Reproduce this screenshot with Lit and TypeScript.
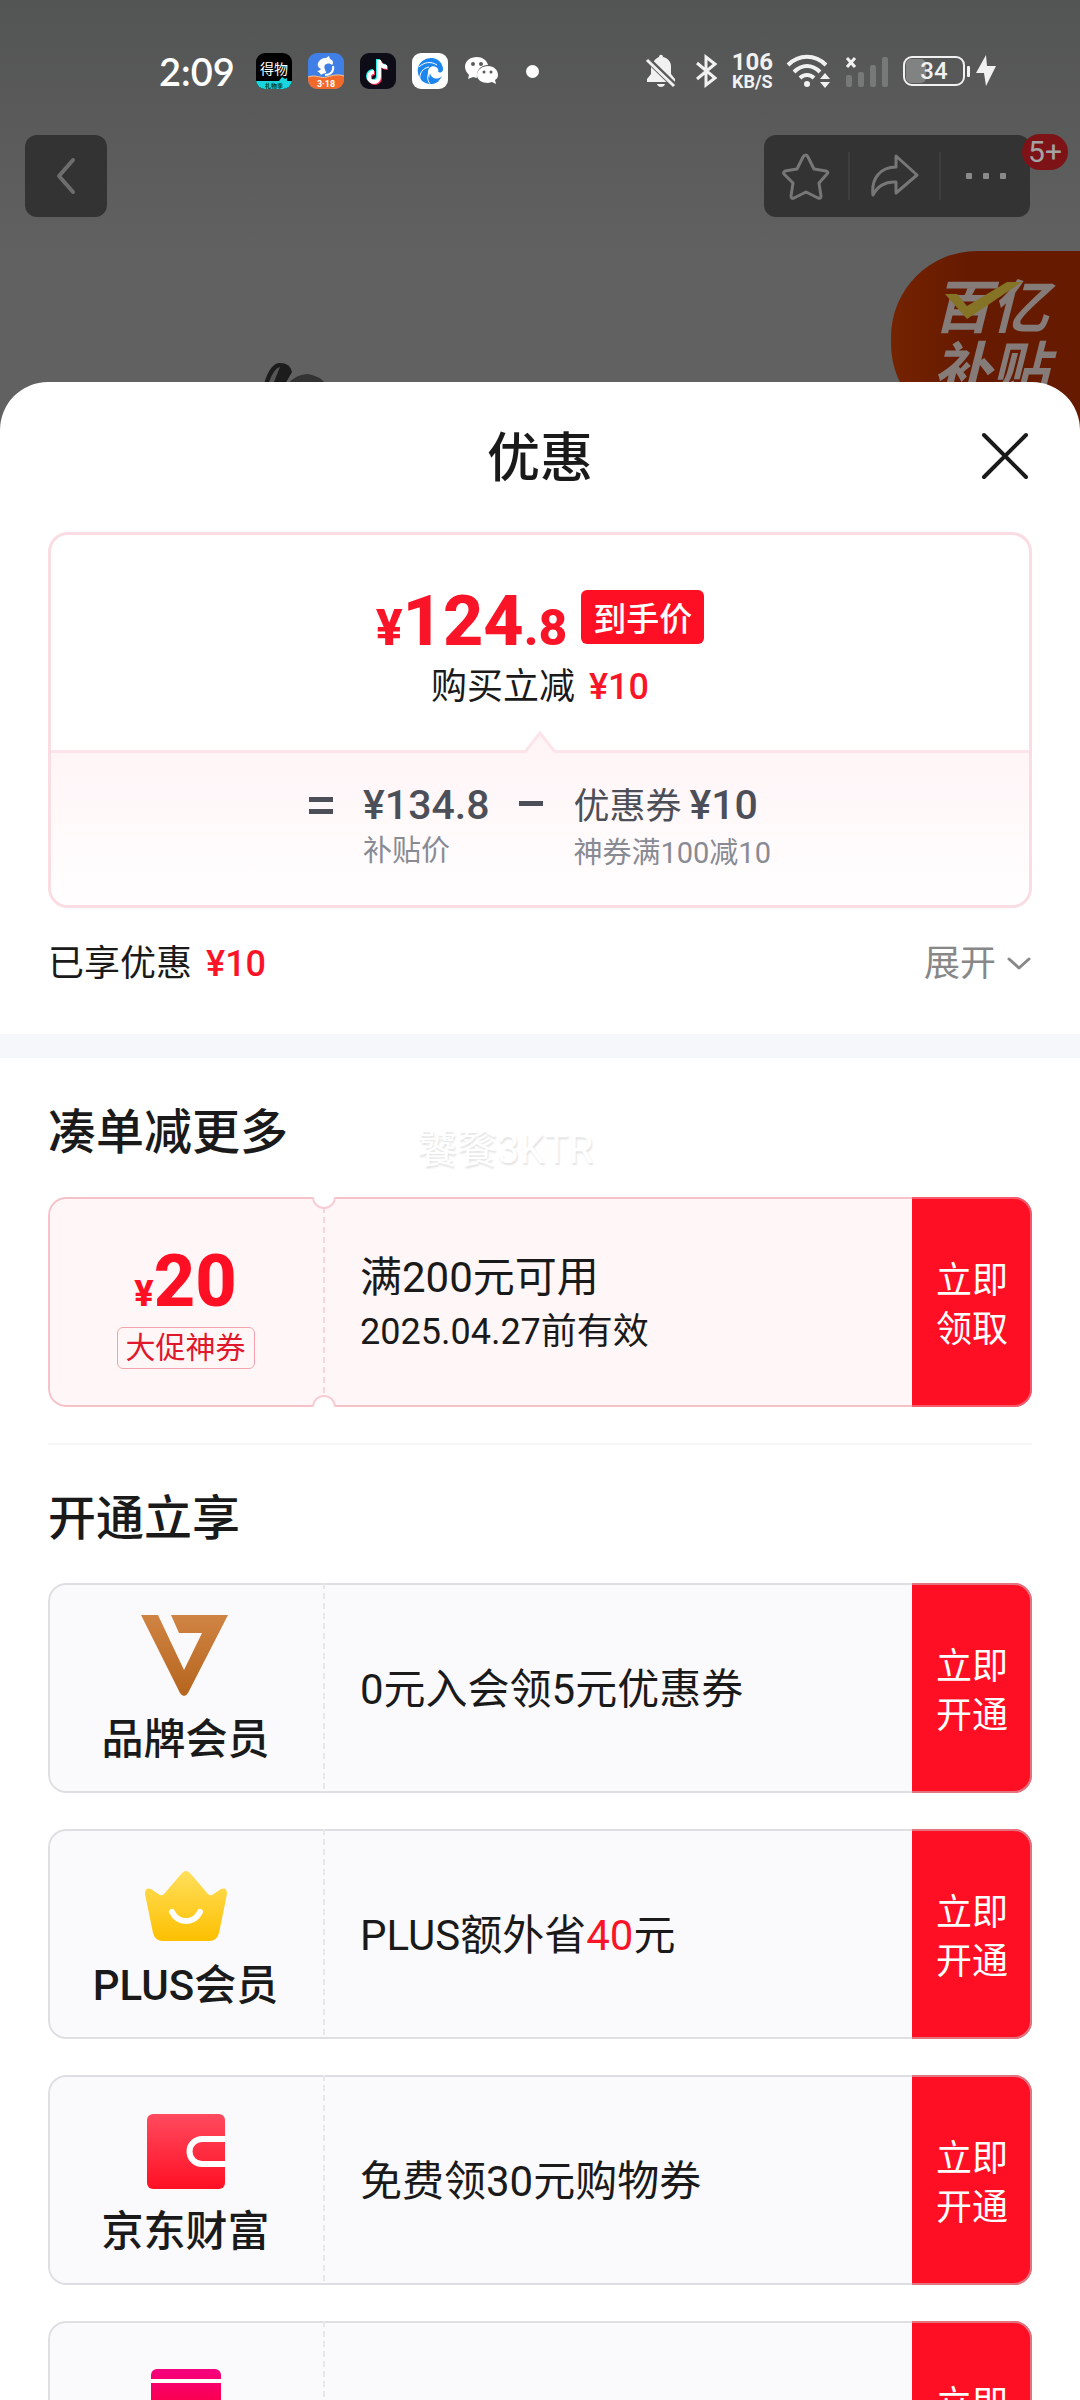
import { LitElement, html, css, svg, TemplateResult } from "lit";
import { customElement, property } from "lit/decorators.js";

/* Shared reset for real buttons that are styled from scratch. */
const buttonReset = css`
  button {
    appearance: none;
    border: 0;
    margin: 0;
    padding: 0;
    background: none;
    color: inherit;
    font: inherit;
    cursor: pointer;
  }
  svg {
    display: block;
  }
`;

@customElement("status-bar")
export class StatusBar extends LitElement {
  static styles = css`
    :host {
      display: flex;
      align-items: center;
      justify-content: space-between;
      padding: 50px 84px 0 159px;
      color: #fff;
      font-family: Roboto, "Noto Sans CJK SC", sans-serif;
    }
    svg {
      display: block;
    }
    .side {
      display: flex;
      align-items: center;
      gap: 16px;
      height: 42px;
    }
    .time {
      font: 600 38px/42px Lato, Roboto, sans-serif;
      margin-right: 5px;
    }
    .tail {
      gap: 13px;
      opacity: 0.92;
    }
    .mute {
      margin-right: 4px;
    }
    .dot {
      width: 13px;
      height: 13px;
      margin-left: 10px;
      border-radius: 50%;
      background: #fff;
    }
    .speed {
      text-align: center;
      font-weight: 700;
    }
    .rate {
      font-size: 24px;
      line-height: 22px;
    }
    .unit {
      font-size: 18px;
      line-height: 18px;
    }
    .power {
      display: flex;
      align-items: center;
      gap: 6px;
    }
  `;

  render() {
    return html`
      <div class="side">
        <span class="time">2:09</span>
        <svg width="36" height="36" viewBox="0 0 36 36">
          <clipPath id="r1"><rect width="36" height="36" rx="9" /></clipPath>
          <g clip-path="url(#r1)">
            <rect width="36" height="36" fill="#000" />
            <path d="M0 28h23l3-4 3 2 2-1v3h5v8H0z" fill="#17d6de" />
          </g>
          <text x="18" y="21" text-anchor="middle" font-size="14" font-weight="400" fill="#fff">得物</text>
          <text x="18" y="35" text-anchor="middle" font-size="6" font-weight="700" fill="#043">礼物季</text>
        </svg>
        <svg width="36" height="36" viewBox="0 0 36 36">
          <clipPath id="r2"><rect width="36" height="36" rx="9" /></clipPath>
          <g clip-path="url(#r2)">
            <rect width="36" height="36" fill="#3f7fe6" />
            <path d="M0 24c9-3 12 2 19 0s11-3 17-1v13H0z" fill="#f26a2b" />
            <path d="M0 24c9-3 12 2 19 0s11-3 17-1" fill="none" stroke="#fbc78d" stroke-width="1" />
          </g>
          <path d="M10 10c2-4 5-5 8-5l3-2 1 3c3 1 4 4 2 6-2-2-5-2-7 0-2 3 1 5 1 8-2 0-4 1-5 2-1-2-2-3-4-4 2 0 3-1 4-2-2-1-4-3-3-6z" fill="#fff" />
          <path d="M25 13c1 5-2 9-8 9" fill="none" stroke="#fff" stroke-width="2" />
          <text x="18" y="34" text-anchor="middle" font-size="9" font-weight="700" fill="#fff">3·18</text>
        </svg>
        <svg width="36" height="36" viewBox="0 0 36 36">
          <rect width="36" height="36" rx="9" fill="#0d0c17" />
          <g fill="none" stroke-width="4">
            <path d="M18 6v17a5 5 0 1 1-5-5M18 7c1 4 4 6 8 6" stroke="#25f4ee" />
            <path d="M20 8v17a5 5 0 1 1-5-5M20 9c1 4 4 6 8 6" stroke="#fe2c55" />
            <path d="M19 7v17a5 5 0 1 1-5-5M19 8c1 4 4 6 8 6" stroke="#fff" />
          </g>
        </svg>
        <svg width="36" height="36" viewBox="0 0 36 36">
          <rect width="36" height="36" rx="9" fill="#fff" />
          <path d="M29 10A13 13 0 1 0 27 28C21 29 15 25 16 19c0-4 4-7 8-5 2 1 3 3 2 5 3 1 5 0 5-3 0-2-1-4-2-6z" fill="#1c86ee" />
          <path d="M7 14c5-5 12-6 18-2M8 27c-1-7 3-12 9-13M19 32c-4-4-4-9-2-12" fill="none" stroke="#fff" stroke-width="1" />
          <path d="M18 20c1 5 7 8 12 3-2 5-7 8-11 8-2-3-2-8-1-11z" fill="#1c86ee" />
        </svg>
        <svg width="36" height="30" viewBox="0 0 36 30">
          <path d="M13 1C6 1 1 5 1 11c0 3 2 6 4 8l-1 4 5-2 4 1C12 14 17 9 24 9 23 4 18 1 13 1z" fill="#fff" />
          <path d="M24 10c-6 0-11 4-11 9s5 8 11 8l4-1 4 2-1-4c2-1 3-3 3-5 0-5-4-9-10-9z" fill="#fff" />
          <g fill="#5a5b5b">
            <circle cx="9" cy="8" r="2" /><circle cx="17" cy="8" r="2" />
            <circle cx="20" cy="16" r="1.5" /><circle cx="27" cy="16" r="1.5" />
          </g>
        </svg>
        <span class="dot"></span>
      </div>

      <div class="side tail">
        <svg class="mute" width="34" height="34" viewBox="0 0 34 34">
          <path d="M10 7c1-2 3-3 5-4 0-3 4-3 4 0 5 1 8 5 8 9v8l4 5v3H3v-3l4-5v-9z" fill="#fff" />
          <path d="M13 30h8c-1 4-7 4-8 0z" fill="#fff" />
          <path d="M2 4l30 29" stroke="#5a5b5b" stroke-width="6" />
          <path d="M3 6l27 26" stroke="#fff" stroke-width="3" />
        </svg>
        <svg width="24" height="34" viewBox="0 0 24 34">
          <path d="M2 9l18 15-9 7V3l9 7L2 25" fill="none" stroke="#fff" stroke-width="3" />
        </svg>
        <div class="speed">
          <div class="rate">106</div>
          <div class="unit">KB/S</div>
        </div>
        <svg width="46" height="36" viewBox="0 0 46 36">
          <g fill="none" stroke="#fff" stroke-width="4">
            <path d="M2 12c11-11 27-11 38 0" /><path d="M8 19c8-8 18-8 26 0" /><path d="M14 25c4-4 10-4 14 0" />
          </g>
          <circle cx="21" cy="31" r="3" fill="#fff" />
          <path d="M34 26l5-6 5 6zM34 29l5 6 5-6z" fill="#fff" />
        </svg>
        <svg width="44" height="34" viewBox="0 0 44 34">
          <path d="M2 4l8 9M10 4l-8 9" stroke="#fff" stroke-width="3" />
          <g fill="#7a7b7b">
            <rect x="1" y="21" width="6" height="12" rx="2" /><rect x="13" y="18" width="6" height="15" rx="2" />
            <rect x="25" y="11" width="6" height="22" rx="2" /><rect x="37" y="3" width="6" height="30" rx="2" />
          </g>
        </svg>
        <div class="power">
          <svg width="68" height="32" viewBox="0 0 68 32">
            <rect x="4" y="4" width="20" height="24" rx="5" fill="#858686" />
            <rect x="2" y="2" width="60" height="28" rx="8" fill="none" stroke="#fff" stroke-width="2" />
            <rect x="65" y="11" width="3" height="11" rx="1" fill="#fff" />
            <text x="32" y="24" text-anchor="middle" font-size="24" font-weight="500" fill="#fff">34</text>
          </svg>
          <svg width="20" height="34" viewBox="0 0 20 34">
            <path d="M10 1L0 19h8l2 13L20 12h-9z" fill="#fff" />
          </svg>
        </div>
      </div>
    `;
  }
}

@customElement("product-backdrop")
export class ProductBackdrop extends LitElement {
  static styles = [
    buttonReset,
    css`
      :host {
        display: block;
        color: #8a8a8a;
        font-family: Roboto, "Noto Sans CJK SC", sans-serif;
      }
      .nav {
        display: flex;
        justify-content: space-between;
        padding: 43px 50px 0 25px;
      }
      .back,
      .tools {
        display: flex;
        align-items: center;
        justify-content: center;
        height: 82px;
        border-radius: 12px;
        background: #333;
      }
      .back {
        width: 82px;
      }
      .tools {
        position: relative;
      }
      .tool {
        display: grid;
        place-items: center;
        width: 84px;
        height: 48px;
      }
      .tool + .tool {
        width: 91px;
        border-left: 2px solid #3e3e3e;
      }
      .badge {
        position: absolute;
        top: -1px;
        right: -38px;
        padding: 0 6px;
        border-radius: 18px;
        background: #7d1317;
        color: #a3a3a3;
        font-size: 30px;
        line-height: 36px;
      }
      .hero {
        display: flex;
        align-items: flex-end;
        justify-content: space-between;
        height: 179px;
        margin-top: 34px;
      }
      .product {
        margin-left: 264px;
      }
      .subsidy {
        position: relative;
        box-sizing: border-box;
        width: 189px;
        height: 179px;
        padding: 26px 0 0 42px;
        border-radius: 86px 0 0 86px;
        background: linear-gradient(90deg, #752300, #661a00 40%);
        color: #857c7a;
        font-size: 58px;
        font-weight: 700;
        font-style: italic;
        line-height: 62px;
      }
      .tick {
        position: absolute;
        left: 54px;
        top: 30px;
      }
    `,
  ];

  render() {
    return html`
      <div class="nav">
        <button class="back" aria-label="返回">
          <svg width="24" height="40" viewBox="0 0 24 40">
            <path d="M19 4L5 20l14 16" fill="none" stroke="#6e6e6e" stroke-width="4" stroke-linecap="round" stroke-linejoin="round" />
          </svg>
        </button>
        <div class="tools">
          <button class="tool" aria-label="收藏">
            <svg width="48" height="48" viewBox="0 0 48 48">
              <path d="M24 3q1 0 2 2l6 12 12 2q3 1 1 3l-8 9 2 13q0 3-3 2l-12-6-12 6q-3 1-3-2l2-13-9-9q-1-2 1-3l12-2 6-12q1-2 3-2z" fill="none" stroke="#777" stroke-width="3" stroke-linejoin="round" />
            </svg>
          </button>
          <button class="tool" aria-label="分享">
            <svg width="50" height="46" viewBox="0 0 50 46">
              <path d="M26 3l21 19-21 18V29C15 28 7 34 3 42 1 26 10 14 26 14z" fill="none" stroke="#777" stroke-width="3" stroke-linejoin="round" />
            </svg>
          </button>
          <button class="tool" aria-label="更多">
            <svg width="40" height="6" viewBox="0 0 40 6" fill="#8a8a8a">
              <rect width="6" height="6" rx="1" /><rect x="17" width="6" height="6" rx="1" /><rect x="34" width="6" height="6" rx="1" />
            </svg>
          </button>
          <span class="badge">5+</span>
        </div>
      </div>
      <div class="hero">
        <svg class="product" width="64" height="68" viewBox="0 0 64 68">
          <path d="M0 22Q6 1 16 1q10 0 12 9l-8 14z" fill="#1c1c1c" />
          <path d="M5 20Q10 6 16 5L10 20z" fill="#555" />
          <path d="M24 22q8-10 20-10 12 2 18 10z" fill="#333" />
        </svg>
        <div class="subsidy">
          <div>百亿</div>
          <div>补贴</div>
          <svg class="tick" width="78" height="40" viewBox="0 0 78 40">
            <path d="M0 13h12l10 12L62 1h15L22 38z" fill="#857425" />
          </svg>
        </div>
      </div>
    `;
  }
}

@customElement("price-summary")
export class PriceSummary extends LitElement {
  static styles = [
    buttonReset,
    css`
      :host {
        display: block;
        padding: 0 48px 46px;
      }
      .card {
        border: 3px solid #f9dde3;
        border-radius: 20px;
        overflow: hidden;
      }
      .total {
        padding: 55px 0 39px;
        text-align: center;
      }
      .price-row {
        display: flex;
        justify-content: center;
        align-items: center;
        gap: 14px;
        height: 54px;
      }
      .price {
        padding-top: 14px;
        color: #fa1428;
        font-size: 50px;
        font-weight: 800;
        line-height: 54px;
      }
      .big {
        font-size: 70px;
      }
      .tag {
        padding: 0 12px;
        border-radius: 6px;
        background: #ff0f23;
        color: #fff;
        font: 500 33px/54px "Noto Sans CJK SC", sans-serif;
      }
      .saving {
        margin-top: 19px;
        font-size: 36px;
        line-height: 48px;
      }
      .red {
        margin-left: 14px;
        color: #fa1428;
        font-weight: 500;
      }
      .formula {
        position: relative;
        display: flex;
        justify-content: center;
        gap: 30px;
        padding: 28px 0 34px;
        border-top: 3px solid #fce4ea;
        background: linear-gradient(#fff5f7, #fffefe);
        color: #4d4f58;
        font-size: 41px;
        font-weight: 500;
        line-height: 48px;
      }
      .caret {
        position: absolute;
        left: 50%;
        top: -23px;
        margin-left: -16px;
      }
      .sign {
        padding-top: 16px;
      }
      .name {
        margin-right: 8px;
        font-size: 36px;
        font-weight: 400;
      }
      .note {
        margin-top: 4px;
        color: #888b94;
        font-size: 29px;
        font-weight: 400;
        line-height: 36px;
      }
      .foot {
        display: flex;
        justify-content: space-between;
        align-items: center;
        margin-top: 32px;
        font-size: 36px;
        line-height: 48px;
      }
      .expand {
        display: flex;
        align-items: center;
        gap: 10px;
        color: #888;
      }
    `,
  ];

  render() {
    return html`
      <div class="card">
        <div class="total">
          <div class="price-row">
            <div class="price">¥<span class="big">124</span>.8</div>
            <span class="tag">到手价</span>
          </div>
          <div class="saving">购买立减<span class="red">¥10</span></div>
        </div>
        <div class="formula">
          <svg class="caret" width="32" height="24" viewBox="0 0 32 24">
            <path d="M1 22L16 3l15 19v2H1z" fill="#fff5f7" />
            <path d="M1 22L16 3l15 19" fill="none" stroke="#fce4ea" stroke-width="3" />
          </svg>
          <svg class="sign" role="img" aria-label="等于" width="24" height="18" viewBox="0 0 24 18" fill="#4d4f58">
            <rect width="24" height="5" /><rect y="12" width="24" height="5" />
          </svg>
          <div>
            <div>¥134.8</div>
            <div class="note">补贴价</div>
          </div>
          <svg class="sign" role="img" aria-label="减" width="24" height="18" viewBox="0 0 24 18" fill="#4d4f58">
            <rect y="4" width="24" height="5" />
          </svg>
          <div>
            <div><span class="name">优惠券</span>¥10</div>
            <div class="note">神券满100减10</div>
          </div>
        </div>
      </div>
      <div class="foot">
        <span>已享优惠<span class="red">¥10</span></span>
        <button class="expand">
          展开
          <svg width="26" height="16" viewBox="0 0 26 16">
            <path d="M3 3l10 9 10-9" fill="none" stroke="#888" stroke-width="3" stroke-linecap="round" stroke-linejoin="round" />
          </svg>
        </button>
      </div>
    `;
  }
}

@customElement("ticket-card")
export class TicketCard extends LitElement {
  @property() action = "";
  @property({ type: Boolean, reflect: true }) coupon = false;

  static styles = [
    buttonReset,
    css`
      :host {
        --edge: rgba(200, 200, 206, 0.55);
        --dash: #e8e8ec;
        position: relative;
        display: flex;
        height: 210px;
        border-radius: 18px;
        overflow: hidden;
        background: #fafafc;
      }
      :host([coupon]) {
        --edge: rgba(240, 150, 165, 0.55);
        --dash: #f6d6dc;
        background: #fff6f7;
      }
      :host::after {
        content: "";
        position: absolute;
        inset: 0;
        border: 2px solid var(--edge);
        border-radius: 18px;
        pointer-events: none;
      }
      .lead {
        width: 275px;
      }
      .perforation {
        position: relative;
        z-index: 1;
        width: 2px;
        background: repeating-linear-gradient(var(--dash) 0 6px, transparent 6px 10px);
      }
      :host([coupon]) .perforation::before,
      :host([coupon]) .perforation::after {
        content: "";
        position: absolute;
        left: -11px;
        box-sizing: border-box;
        width: 24px;
        height: 24px;
        border: 2px solid #f8cdd5;
        border-radius: 50%;
        background: #fff;
      }
      .perforation::before {
        top: -12px;
      }
      .perforation::after {
        bottom: -12px;
      }
      .body {
        flex: 1;
        display: flex;
        flex-direction: column;
        justify-content: center;
        padding: 4px 0 0 35px;
      }
      .act {
        width: 120px;
        padding: 0 24px;
        background: #ff0f23;
        color: #fff;
        font: 400 36px/49px "Noto Sans CJK SC", sans-serif;
      }
    `,
  ];

  render() {
    return html`
      <div class="lead"><slot name="lead"></slot></div>
      <div class="perforation"></div>
      <div class="body"><slot></slot></div>
      <button class="act">${this.action}</button>
    `;
  }
}

const brandIcon = svg`
  <linearGradient id="g" x1="0" y1="0" x2="0" y2="1"><stop offset="0" stop-color="#d08444" /><stop offset="1" stop-color="#b5651d" /></linearGradient>
  <path d="M3 4h17l26 55L64 22H41l-8-18h57L50 82q-4 6-8 0z" fill="url(#g)" />`;

const crownIcon = svg`
  <linearGradient id="g" x1="0" y1="0" x2="0" y2="1"><stop offset="0" stop-color="#ffdf5c" /><stop offset="1" stop-color="#fdc000" /></linearGradient>
  <path d="M44 16q4-4 8 0l18 21q2 2 4 1l9-6q6-2 6 5l-8 39q-2 8-10 8H25q-8 0-10-8L7 37q0-7 6-5l9 6q2 1 4-1z" fill="url(#g)" />
  <path d="M34 55c6 12 22 12 28 0" fill="none" stroke="#fff" stroke-width="6" stroke-linecap="round" />`;

const walletIcon = svg`
  <linearGradient id="g" x1="0" y1="0" x2="0" y2="1"><stop offset="0" stop-color="#ff4a5f" /><stop offset="1" stop-color="#ff1024" /></linearGradient>
  <rect x="9" y="11" width="78" height="75" rx="6" fill="url(#g)" />
  <path d="M87 36H64a12 12 0 0 0 0 25h23" fill="none" stroke="#fff" stroke-width="6" />`;

const cardIcon = svg`
  <linearGradient id="g" x1="0" y1="0" x2="0" y2="1"><stop offset="0" stop-color="#f5007f" /><stop offset="1" stop-color="#ff0028" /></linearGradient>
  <rect x="13" y="20" width="70" height="60" rx="6" fill="url(#g)" />
  <path d="M13 32h70" stroke="#fff" stroke-width="4" />`;

interface Membership {
  name: string;
  icon: TemplateResult;
  offer: unknown;
}

const memberships: Membership[] = [
  { name: "品牌会员", icon: brandIcon, offer: "0元入会领5元优惠券" },
  { name: "PLUS会员", icon: crownIcon, offer: html`PLUS额外省<span class="hot">40</span>元` },
  { name: "京东财富", icon: walletIcon, offer: "免费领30元购物券" },
  { name: "", icon: cardIcon, offer: "" },
];

@customElement("member-list")
export class MemberList extends LitElement {
  static styles = css`
    :host {
      display: flex;
      flex-direction: column;
      gap: 36px;
      font-size: 42px;
      line-height: 58px;
    }
    .lead {
      display: flex;
      flex-direction: column;
      align-items: center;
      padding-top: 28px;
    }
    .name {
      margin-top: 4px;
      font-weight: 500;
    }
    .hot {
      color: #fa1428;
    }
  `;

  render() {
    return memberships.map(
      (m) => html`
        <ticket-card action="立即开通">
          <div slot="lead" class="lead"><member-icon .art=${m.icon}></member-icon><span class="name">${m.name}</span></div>
          <div>${m.offer}</div>
        </ticket-card>
      `,
    );
  }
}

/* Each icon has a shadow root of its own, so gradient ids stay local. */
@customElement("member-icon")
export class MemberIcon extends LitElement {
  @property({ attribute: false }) art?: TemplateResult;

  static styles = css`
    :host,
    svg {
      display: block;
    }
  `;

  render() {
    return html`<svg width="96" height="96" viewBox="0 0 96 96">${this.art}</svg>`;
  }
}

@customElement("app-root")
export class AppRoot extends LitElement {
  static styles = [
    buttonReset,
    css`
      :host {
        display: flex;
        flex-direction: column;
        height: 100vh;
        overflow: hidden;
        background: linear-gradient(#535454, #616161 260px);
        color: #1a1a1a;
        font-family: Roboto, "Noto Sans CJK SC", sans-serif;
      }
      .sheet {
        position: relative;
        flex: 1;
        min-height: 0;
        margin-top: -48px;
        overflow-y: auto;
        scrollbar-width: none;
        border-radius: 48px 48px 0 0;
        background: #fff;
      }
      .head {
        display: grid;
        grid-template-columns: 1fr auto 1fr;
        align-items: center;
        padding: 45px 48px;
      }
      .title {
        grid-column: 2;
        margin: 0;
        padding-top: 4px;
        font-size: 53px;
        font-weight: 500;
        line-height: 56px;
      }
      .close {
        justify-self: end;
      }
      .band {
        height: 24px;
        background: #f6f7fb;
      }
      .sections {
        padding: 45px 48px 36px;
      }
      .heading {
        margin: 0 0 34px;
        font-size: 48px;
        font-weight: 500;
        line-height: 60px;
      }
      .rule {
        height: 2px;
        margin: 36px 0 44px;
        border: 0;
        background: #f7f7f8;
      }
      .face {
        display: flex;
        flex-direction: column;
        align-items: center;
        padding-top: 55px;
      }
      .amount {
        color: #ff0f23;
        font-size: 36px;
        font-weight: 800;
        line-height: 60px;
      }
      .big {
        font-size: 72px;
      }
      .kind {
        margin-top: 3px;
        padding: 0 8px;
        border: 1px solid #f4a3ae;
        border-radius: 6px;
        color: #e0182c;
        font-size: 30px;
        line-height: 40px;
      }
      .rule-text {
        font-size: 42px;
        line-height: 56px;
      }
      .valid {
        font-size: 36px;
        line-height: 52px;
      }
      .watermark {
        position: absolute;
        left: 417px;
        top: 744px;
        color: #fff;
        font-size: 40px;
        line-height: 48px;
        text-shadow: 1px 2px 2px #e2e2e2;
      }
    `,
  ];

  render() {
    return html`
      <status-bar></status-bar>
      <product-backdrop></product-backdrop>
      <main class="sheet">
        <header class="head">
          <h1 class="title">优惠</h1>
          <button class="close" aria-label="关闭">
            <svg width="54" height="54" viewBox="0 0 54 54">
              <path d="M6 5l42 42M48 5L6 47" stroke="#1a1a1a" stroke-width="4" stroke-linecap="round" />
            </svg>
          </button>
        </header>
        <price-summary></price-summary>
        <div class="band"></div>
        <div class="sections">
          <h2 class="heading">凑单减更多</h2>
          <ticket-card coupon action="立即领取">
            <div slot="lead" class="face">
              <div class="amount">¥<span class="big">20</span></div>
              <div class="kind">大促神券</div>
            </div>
            <div class="rule-text">满200元可用</div>
            <div class="valid">2025.04.27前有效</div>
          </ticket-card>
          <hr class="rule" />
          <h2 class="heading">开通立享</h2>
          <member-list></member-list>
        </div>
        <span class="watermark" aria-hidden="true">饕餮3KTR</span>
      </main>
    `;
  }
}
